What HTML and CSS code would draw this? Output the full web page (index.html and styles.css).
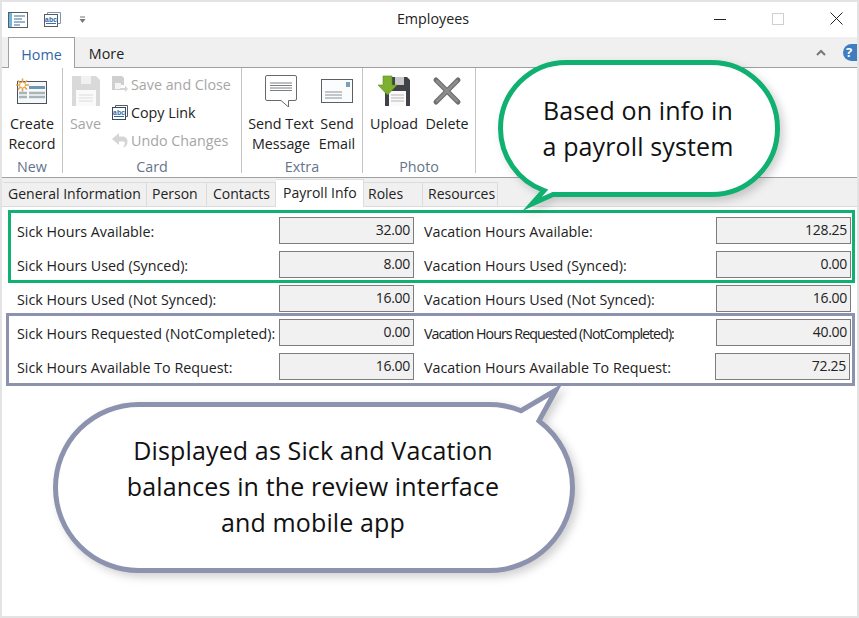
FILE: index.html
```html
<!DOCTYPE html>
<html lang="en">
<head>
<meta charset="utf-8">
<title>Employees</title>
<link rel="stylesheet" href="styles.css">
</head>
<body>
<div class="app">
  <div class="window">
    <header class="titlebar">
      <div class="qat">
        <svg class="qat-doc" width="20" height="16" viewBox="0 0 20 16"><rect x=".5" y=".5" width="19" height="15" fill="#fff" stroke="#555c63"/><rect x="1" y="1" width="3" height="14" fill="#6fb6da"/><path d="M6 4h11M6 7h8M6 10h11M6 13h6" stroke="#3a6a96" fill="none"/></svg>
        <svg class="qat-abc" width="17" height="15" viewBox="0 0 17 15"><path d="M3.500 2V.5h13v11H14" fill="none" stroke="#7d95aa"/><rect x=".5" y="2.500" width="13" height="12" fill="#fff" stroke="#555c63"/><text class="abc" x="7" y="9.500" text-anchor="middle">abc</text><path d="M2 11.500h10" stroke="#3a6ea5"/></svg>
        <svg class="qat-more" width="7" height="8" viewBox="0 0 7 8"><path d="M1 1h5" stroke="#777"/><path d="M.5 3h6L3.500 7z" fill="#777"/></svg>
      </div>
      <div class="title">Employees</div>
      <div class="controls">
        <svg class="ctl" width="12" height="12" viewBox="0 0 12 12"><path d="M0 6.500h12" stroke="#222"/></svg>
        <svg class="ctl" width="12" height="12" viewBox="0 0 12 12"><rect x=".5" y=".5" width="11" height="11" fill="none" stroke="#cfcfcf"/></svg>
        <svg class="ctl" width="13" height="13" viewBox="0 0 13 13"><path d="M.5 .5l12 12M12.500 .5l-12 12" stroke="#222"/></svg>
      </div>
    </header>

    <nav class="ribbon-tabs">
      <div class="rtab rtab-active">Home</div>
      <div class="rtab">More</div>
      <div class="ribbon-tools">
        <svg width="10" height="7" viewBox="0 0 10 7"><path d="M1 6l4-4 4 4" fill="none" stroke="#777" stroke-width="2"/></svg>
        <div class="help">?</div>
      </div>
    </nav>

    <section class="ribbon">
      <div class="group group-new">
        <div class="group-body">
          <div class="big btn-create">
            <svg class="icon32" width="32" height="32" viewBox="0 0 32 32"><rect x="1.500" y="6.500" width="29" height="22" fill="#f6f8f9" stroke="#4d5358"/><rect x="13" y="11" width="16" height="3" fill="#6d97b3"/><path d="M3 18h8M13 18h16M3 22h8M13 22h16" stroke="#a9b4ba" stroke-width="2.500" fill="none"/><path d="M6.500 3.500v13M0 10h13M2 5.500l9 9M11 5.500l-9 9" stroke="#e2a24b" stroke-width="1.600"/><circle cx="6.500" cy="10" r="3" fill="#fff" stroke="#e2a24b"/></svg>
            <span>Create<br>Record</span>
          </div>
        </div>
        <div class="group-label">New</div>
      </div>

      <div class="group group-card">
        <div class="group-body">
          <div class="big btn-save disabled">
            <svg class="icon32" width="32" height="32" viewBox="0 0 32 32"><path d="M2 1h24l4 4v26H2z" fill="#d9d9d9"/><rect x="11" y="1" width="10" height="8" fill="#f1f1f1"/><rect x="6" y="15" width="20" height="16" fill="#fafafa"/><path d="M9 20h14M9 23h14M9 26h14" stroke="#dcdcdc"/></svg>
            <span>Save</span>
          </div>
          <div class="smalls">
            <div class="small disabled">
              <svg width="16" height="16" viewBox="0 0 16 16"><path d="M0 0h10l2 2v7H8v5H0z" fill="#cfcfcf"/><rect x="3" y="7" width="6" height="6" fill="#f4f4f4"/><path d="M8 12h5V9.500l3 3.500-3 3v-2H8z" fill="#d5d5d5"/></svg>
              <span>Save and Close</span>
            </div>
            <div class="small">
              <svg width="16" height="15" viewBox="0 0 16 15"><path d="M3.500 2V.5h12v11H14" fill="none" stroke="#555c63"/><rect x=".5" y="2.500" width="13" height="12" fill="#fff" stroke="#3c4a58"/><text class="abc" x="7" y="9.500" text-anchor="middle">abc</text><path d="M2 11.500h10" stroke="#2f6aa5"/></svg>
              <span>Copy Link</span>
            </div>
            <div class="small disabled">
              <svg width="16" height="15" viewBox="0 0 16 15"><path d="M7 0L0 6l7 6V8.500h4c2 0 2.500 2 1 4l-1 2c3-.5 4.500-3 4.500-6 0-3-2-5-5-5H7z" fill="#d5d5d5"/></svg>
              <span>Undo Changes</span>
            </div>
          </div>
        </div>
        <div class="group-label">Card</div>
      </div>

      <div class="group group-extra">
        <div class="group-body">
          <div class="big btn-text">
            <svg class="icon32" width="32" height="32" viewBox="0 0 32 32"><path d="M2 .5h28a1.500 1.500 0 0 1 1.500 1.500v22a1.500 1.500 0 0 1-1.500 1.500h-6.500V32L16 25.500H2A1.500 1.500 0 0 1 .5 24V2A1.500 1.500 0 0 1 2 .5z" fill="#fff" stroke="#6a6a6a"/><path d="M5 8h22M5 10.500h22M5 13h22M5 15.500h22" stroke="#7d8186" fill="none"/></svg>
            <span>Send Text<br>Message</span>
          </div>
          <div class="big btn-email">
            <svg class="icon32" width="32" height="32" viewBox="0 0 32 32"><rect x=".5" y="4.500" width="31" height="23" fill="#fbfcfd" stroke="#5a6065"/><rect x="25" y="7" width="4" height="5" fill="#7ba0bc"/><path d="M4 17h17M4 20h17M4 23h17" stroke="#8a8f94" fill="none"/></svg>
            <span>Send<br>Email</span>
          </div>
        </div>
        <div class="group-label">Extra</div>
      </div>

      <div class="group group-photo">
        <div class="group-body">
          <div class="big btn-upload">
            <svg class="icon32" width="32" height="32" viewBox="0 0 32 32"><path d="M7 2h22l3 3v26H7z" fill="#3f4246"/><rect x="17" y="2" width="9" height="8" fill="#c8c8c8"/><rect x="11" y="16" width="17" height="15" fill="#fafafa"/><path d="M13 20h13M13 23h13M13 26h13" stroke="#b5b5b5"/><path d="M5 1h9v9h5l-9.500 10L0 10h5z" fill="#7cb02e" stroke="#5f8f1e" stroke-width=".6"/></svg>
            <span>Upload</span>
          </div>
          <div class="big btn-delete">
            <svg class="icon32" width="32" height="32" viewBox="0 0 32 32"><path d="M5 5l22 22M27 5L5 27" stroke="#6f6f6f" stroke-width="5" stroke-linecap="round"/><path d="M6 6l20 20M26 6L6 26" stroke="#8c8c8c" stroke-width="2.500" stroke-linecap="round"/></svg>
            <span>Delete</span>
          </div>
        </div>
        <div class="group-label">Photo</div>
      </div>
    </section>

    <nav class="tabs">
      <div class="tab tab-general">General Information</div>
      <div class="tab tab-person">Person</div>
      <div class="tab tab-contacts">Contacts</div>
      <div class="tab tab-payroll">Payroll Info</div>
      <div class="tab tab-roles">Roles</div>
      <div class="tab tab-resources">Resources</div>
    </nav>

    <main class="form">
      <div class="label">Sick Hours Available:</div><div class="value">32.00</div>
      <div class="label">Vacation Hours Available:</div><div class="value">128.25</div>
      <div class="label">Sick Hours Used (Synced):</div><div class="value">8.00</div>
      <div class="label">Vacation Hours Used (Synced):</div><div class="value">0.00</div>
      <div class="label">Sick Hours Used (Not Synced):</div><div class="value">16.00</div>
      <div class="label">Vacation Hours Used (Not Synced):</div><div class="value">16.00</div>
      <div class="label">Sick Hours Requested (NotCompleted):</div><div class="value">0.00</div>
      <div class="label label-tight">Vacation Hours Requested (NotCompleted):</div><div class="value">40.00</div>
      <div class="label">Sick Hours Available To Request:</div><div class="value">16.00</div>
      <div class="label">Vacation Hours Available To Request:</div><div class="value value-shifted">72.25</div>
    </main>
  </div>

  <div class="outline outline-green"></div>
  <div class="outline outline-purple"></div>

  <svg class="bubbles" width="859" height="618" viewBox="0 0 859 618">
    <path class="bubble bubble-green" d="M553 194.500H711.500A66 66 0 0 0 711.500 62.500H566.500A66 66 0 0 0 500.500 128.500A66 66 0 0 0 544 190.500L532 204Z"/>
    <path class="bubble bubble-purple" d="M138.500 404.500H489.500A83 83 0 0 1 521 410.700L556 390L539 420.900A83 83 0 0 1 572.500 487.500A83 83 0 0 1 489.500 570.500H138.500A83 83 0 0 1 55.500 487.500A83 83 0 0 1 138.500 404.500Z"/>
  </svg>
  <div class="note note-green">Based on info in<br>a payroll system</div>
  <div class="note note-purple">Displayed as Sick and Vacation<br>balances in the review interface<br>and mobile app</div>
</div>
</body>
</html>
```
FILE: styles.css
```css
* { box-sizing: border-box; }
html, body { margin: 0; padding: 0; }
body { font-family: "Open Sans", "Noto Sans", sans-serif; font-size: 14.3px; color: #222; }

.app { position: relative; width: 859px; height: 618px; padding: 2px; background: #e3e3e3; overflow: hidden; }
.window { width: 855px; height: 614px; background: #fff; display: flex; flex-direction: column; }

.titlebar { height: 35px; flex: none; display: grid; grid-template-columns: 1fr auto 1fr; align-items: center; padding-left: 7px; }
.qat { display: flex; align-items: center; }
.qat-doc { margin-left: -1px; }
.qat-abc { margin-left: 16px; }
.qat-more { margin-left: 18px; }
.abc { font-family: "Liberation Mono", monospace; font-size: 7px; font-weight: 700; fill: #2f6aa5; }
.title { line-height: 20px; margin-top: -2px; }
.controls { display: flex; justify-content: flex-end; align-items: center; padding-right: 14px; gap: 46px; margin-top: -2px; }

.ribbon-tabs { height: 31px; flex: none; display: flex; align-items: flex-end; background: #f0f0f0; border-bottom: 1px solid #a0a0a0; padding-left: 6px; }
.rtab { height: 31px; margin-bottom: -1px; padding-top: 7px; line-height: 20px; text-align: center; width: 67px; }
.rtab-active { background: #fff; border: 1px solid #a0a0a0; border-bottom: 0; color: #2f66a8; }
.rtab + .rtab { width: 63px; }
.ribbon-tools { margin-left: auto; align-self: center; display: flex; align-items: center; gap: 17px; }
.help { width: 14px; height: 17px; background: #3f7cc0; border-radius: 9px 0 0 9px; color: #fff; font-weight: 700; font-size: 13px; line-height: 17px; padding-left: 3px; }

.ribbon { height: 110px; flex: none; display: flex; align-items: flex-start; border-bottom: 1px solid #a0a0a0; }
.group { height: 105px; flex: none; display: flex; flex-direction: column; border-right: 1px solid #c4c4c4; }
.group-new { width: 61px; }
.group-card { width: 179px; }
.group-extra { width: 121px; }
.group-photo { width: 113px; }
.group-body { flex: 1; display: flex; min-height: 0; }
.group-label { flex: none; height: 16px; line-height: 20px; text-align: center; color: #64748a; }
.big { display: flex; flex-direction: column; align-items: center; padding-top: 7px; text-align: center; line-height: 20px; flex: none; }
.icon32 { display: block; flex: none; margin-bottom: 7px; }
.btn-create { width: 60px; }
.btn-save { width: 45px; }
.btn-text { width: 78px; }
.btn-email { width: 34px; }
.btn-upload { width: 62px; }
.btn-delete { width: 44px; }
.smalls { margin-left: 4px; padding-top: 2px; }
.small { height: 28px; display: flex; align-items: center; gap: 3px; white-space: nowrap; }
.small svg { flex: none; }
.disabled { color: #a6a6a6; }

.tabs { height: 29px; flex: none; display: flex; align-items: flex-end; background: #f0f0f0; border-bottom: 1px solid #dcdcdc; padding-left: 1px; font-size: 14px; }
.tab { height: 25px; line-height: 22px; padding-left: 5px; white-space: nowrap; border: 1px solid #dcdcdc; border-left: 0; border-bottom: 0; margin-bottom: -1px; }
.tab-general { width: 144px; }
.tab-person { width: 60px; }
.tab-contacts { width: 69px; padding-left: 6px; }
.tab-payroll { width: 88px; height: 28px; background: #fff; line-height: 25px; padding-bottom: 3px; padding-left: 7px; }
.tab-roles { width: 59px; padding-left: 4px; }
.tab-resources { width: 75px; }

.form { display: grid; grid-template-columns: 262px 135px 302px 135px; grid-auto-rows: 27px; row-gap: 7px; padding: 10px 0 0 15px; align-items: stretch; }
.label { font-size: 14.3px; line-height: 29px; white-space: nowrap; }
.label:nth-child(4n+3) { padding-left: 10px; }
.label-tight { letter-spacing: -1px; }
.value { font-size: 14px; letter-spacing: -.3px; background: #f1f1f1; border: 1px solid #7d7d7d; text-align: right; padding-right: 3px; line-height: 24px; }
.value-shifted { position: relative; left: -1px; }

.outline { position: absolute; border-style: solid; border-width: 3px; }
.outline-green { left: 8px; top: 210px; width: 847px; height: 73px; border-color: #10b070; }
.outline-purple { left: 6px; top: 313px; width: 849px; height: 73px; border-color: #8d93ae; }

.bubbles { position: absolute; left: 0; top: 0; }
.bubble { fill: #fff; stroke-width: 5; stroke-linejoin: miter; stroke-miterlimit: 10; filter: drop-shadow(4px 4px 4px rgba(0, 0, 0, .18)); }
.bubble-green { stroke: #10b070; }
.bubble-purple { stroke: #8d93ae; }

.note { position: absolute; text-align: center; white-space: nowrap; color: #111; font-size: 25px; letter-spacing: .13px; line-height: 36px; }
.note-green { left: 500px; width: 276px; top: 92px; }
.note-purple { left: 56px; width: 514px; top: 432px; }
```
